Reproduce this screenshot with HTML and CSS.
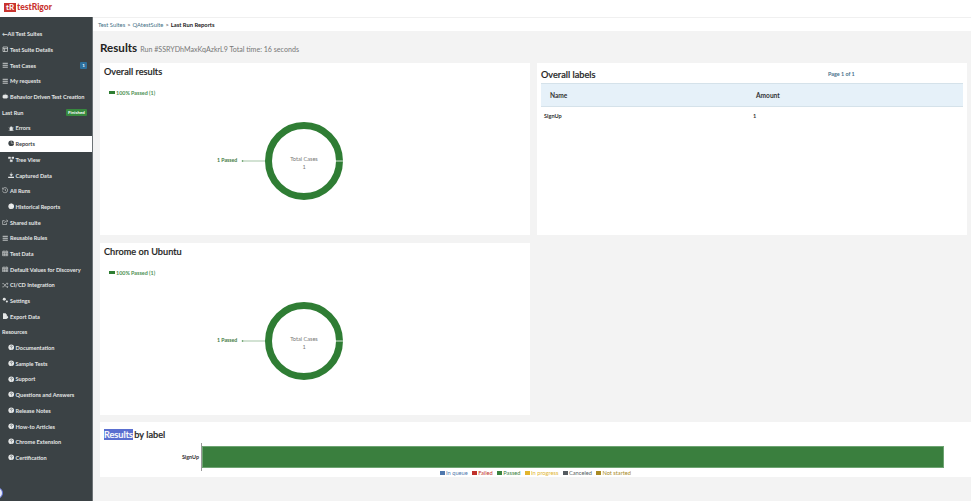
FILE: index.html
```html
<!DOCTYPE html>
<html lang="en">
<head>
    <meta charset="UTF-8">
    <title>testRigor - Last Run Reports</title>
    <link rel="stylesheet" href="styles.css">
</head>
<body>

    <svg class="iconDefs" width="0" height="0">
        <symbol id="list" viewBox="0 0 10 10"><path d="M1 2h8M1 5h8M1 8h8" stroke="currentColor" stroke-width="1.3" fill="none"/></symbol>
        <symbol id="box" viewBox="0 0 10 10"><path d="M1.5 1.5h7v7h-7zM1.5 4h7M4 4v4.5" stroke="currentColor" stroke-width="1" fill="none"/></symbol>
        <symbol id="help" viewBox="0 0 10 10"><circle cx="5" cy="5" r="4.4" fill="currentColor"/><path d="M3.7 4a1.3 1.3 0 1 1 1.9 1.2c-.5.3-.6.5-.6 1" stroke="#3b4245" stroke-width=".9" fill="none"/><circle cx="5" cy="7.6" r=".6" fill="#3b4245"/></symbol>
        <symbol id="pie" viewBox="0 0 10 10"><circle cx="5" cy="5" r="4.4" fill="currentColor"/><path d="M5 5V.6M5 5h4.4" stroke="#fff" stroke-width=".7"/></symbol>
        <symbol id="robot" viewBox="0 0 10 10"><path d="M2.5 3h5a1 1 0 0 1 1 1v3a1 1 0 0 1-1 1h-5a1 1 0 0 1-1-1V4a1 1 0 0 1 1-1zM5 1v2M0 5v2M10 5v2" stroke="currentColor" fill="currentColor" stroke-width=".7"/></symbol>
        <symbol id="bug" viewBox="0 0 10 10"><path d="M3 9V4.5a2 2 0 0 1 4 0V9zM1 4l2 1.5M9 4L7 5.500M1 8.500l2-1M9 8.500l-2-1" stroke="currentColor" fill="currentColor" stroke-width=".7"/></symbol>
        <symbol id="tree" viewBox="0 0 10 10"><path d="M.5 1.500h3.500v2.500h-3.500zM6 1.500h3.500v2.500h-3.500zM3.300 6h3.400v3h-3.400zM2.500 4l2 2M7.500 4l-2 2" stroke="currentColor" fill="currentColor" stroke-width=".6"/></symbol>
        <symbol id="download" viewBox="0 0 10 10"><path d="M5 .5v5M3 3.500h4L5 6.500zM.5 7.500h9v2h-9z" stroke="currentColor" fill="currentColor" stroke-width=".7"/></symbol>
        <symbol id="history" viewBox="0 0 10 10"><path d="M1.500 2.500a4 4 0 1 1-.8 3M5 3v2.300l1.500 1M.5 1v2.300h2.300" stroke="currentColor" fill="none" stroke-width=".9"/></symbol>
        <symbol id="share" viewBox="0 0 10 10"><path d="M7 6v2.500H1v-6h3M4 6c0-2 1.500-3 4-3M7 1l2 2-2 2" stroke="currentColor" fill="none" stroke-width=".9"/></symbol>
        <symbol id="calendar" viewBox="0 0 10 10"><path d="M1 2h8v7H1zM1 4h8M3.500 4v5M6.500 4v5M1 6.500h8M3 1v1M7 1v1" stroke="currentColor" fill="none" stroke-width=".9"/></symbol>
        <symbol id="shuffle" viewBox="0 0 10 10"><path d="M.5 2.500h2l4 5h2.500M.5 7.500h2l4-5h2.500M8 1l1.500 1.500L8 4M8 6l1.500 1.500L8 9" stroke="currentColor" fill="none" stroke-width=".9"/></symbol>
        <symbol id="cogs" viewBox="0 0 10 10"><circle cx="3.500" cy="3.500" r="2.300" fill="currentColor"/><circle cx="7.500" cy="7" r="1.600" fill="currentColor"/></symbol>
        <symbol id="file" viewBox="0 0 10 10"><path d="M1.500 .5h4l2 2v7h-6zM5 5.500h3V4l2 2.500L8 9V7.500H5z" fill="currentColor"/></symbol>
    </svg>

    <header class="topBar">
        <div class="logo"><span class="logoMark">tR</span><span class="logoText">testRigor</span></div>
    </header>

    <div class="appBody">
        <nav class="sideNav">
            <a class="navItem"><span class="backArrow">&#8592;</span>All Test Suites</a>
            <a class="navItem"><svg class="navIcon"><use href="#box"/></svg>Test Suite Details</a>
            <a class="navItem"><svg class="navIcon"><use href="#list"/></svg>Test Cases<span class="countBadge">1</span></a>
            <a class="navItem"><svg class="navIcon"><use href="#list"/></svg>My requests</a>
            <a class="navItem"><svg class="navIcon"><use href="#robot"/></svg>Behavior Driven Test Creation</a>
            <a class="navItem">Last Run<span class="statusBadge">Finished</span></a>
            <a class="navItem subItem"><svg class="navIcon"><use href="#bug"/></svg>Errors</a>
            <a class="navItem subItem active"><svg class="navIcon"><use href="#pie"/></svg>Reports</a>
            <a class="navItem subItem"><svg class="navIcon"><use href="#tree"/></svg>Tree View</a>
            <a class="navItem subItem"><svg class="navIcon"><use href="#download"/></svg>Captured Data</a>
            <a class="navItem"><svg class="navIcon"><use href="#history"/></svg>All Runs</a>
            <a class="navItem subItem"><svg class="navIcon"><use href="#pie"/></svg>Historical Reports</a>
            <a class="navItem"><svg class="navIcon"><use href="#share"/></svg>Shared suite</a>
            <a class="navItem"><svg class="navIcon"><use href="#list"/></svg>Reusable Rules</a>
            <a class="navItem"><svg class="navIcon"><use href="#calendar"/></svg>Test Data</a>
            <a class="navItem"><svg class="navIcon"><use href="#calendar"/></svg>Default Values for Discovery</a>
            <a class="navItem"><svg class="navIcon"><use href="#shuffle"/></svg>CI/CD Integration</a>
            <a class="navItem"><svg class="navIcon"><use href="#cogs"/></svg>Settings</a>
            <a class="navItem"><svg class="navIcon"><use href="#file"/></svg>Export Data</a>
            <a class="navItem">Resources</a>
            <a class="navItem subItem"><svg class="navIcon"><use href="#help"/></svg>Documentation</a>
            <a class="navItem subItem"><svg class="navIcon"><use href="#help"/></svg>Sample Tests</a>
            <a class="navItem subItem"><svg class="navIcon"><use href="#help"/></svg>Support</a>
            <a class="navItem subItem"><svg class="navIcon"><use href="#help"/></svg>Questions and Answers</a>
            <a class="navItem subItem"><svg class="navIcon"><use href="#help"/></svg>Release Notes</a>
            <a class="navItem subItem"><svg class="navIcon"><use href="#help"/></svg>How-to Articles</a>
            <a class="navItem subItem"><svg class="navIcon"><use href="#help"/></svg>Chrome Extension</a>
            <a class="navItem subItem"><svg class="navIcon"><use href="#help"/></svg>Certification</a>
            <span class="helpBubble"></span>
        </nav>

        <div class="mainColumn">
            <div class="breadcrumb">
                <a>Test Suites</a><span class="crumbSep">&gt;</span><a>QAtestSuite</a><span class="crumbSep">&gt;</span><span class="crumbCurrent">Last Run Reports</span>
            </div>

            <main class="content">
                <div class="pageTitle">
                    <h1>Results</h1>
                    <span class="runInfo">Run #SSRYDhMaxKqAzkrL9 Total time: 16 seconds</span>
                </div>

                <div class="cardGrid">
                    <section class="card">
                        <h2>Overall results</h2>
                        <div class="chartLegend"><span class="swatch"></span>100% Passed (1)</div>
                        <svg class="donut" viewBox="0 0 430 106" width="430" height="106">
                            <circle cx="204" cy="61" r="35.500" fill="none" stroke="#2f7d34" stroke-width="7"/>
                            <path d="M235 61h8" stroke="#fff" stroke-width=".8"/>
                            <path d="M143 61h22" stroke="#7fae82" stroke-width=".7"/>
                            <circle cx="142.500" cy="61" r=".8" fill="#36803a"/>
                            <text class="donutLabel" x="117" y="62">1 Passed</text>
                            <text class="donutCenter" x="204" y="61">Total Cases</text>
                            <text class="donutCenter" x="204" y="69">1</text>
                        </svg>
                    </section>

                    <section class="card labelsCard">
                        <div class="labelsHead">
                            <h2>Overall labels</h2>
                            <span class="pageCount">Page 1 of 1</span>
                        </div>
                        <table class="labelsTable">
                            <thead>
                                <tr><th>Name</th><th>Amount</th></tr>
                            </thead>
                            <tbody>
                                <tr><td>SignUp</td><td class="amount">1</td></tr>
                            </tbody>
                        </table>
                    </section>

                    <section class="card">
                        <h2>Chrome on Ubuntu</h2>
                        <div class="chartLegend"><span class="swatch"></span>100% Passed (1)</div>
                        <svg class="donut" viewBox="0 0 430 106" width="430" height="106">
                            <circle cx="204" cy="61" r="35.500" fill="none" stroke="#2f7d34" stroke-width="7"/>
                            <path d="M235 61h8" stroke="#fff" stroke-width=".8"/>
                            <path d="M143 61h22" stroke="#7fae82" stroke-width=".7"/>
                            <circle cx="142.500" cy="61" r=".8" fill="#36803a"/>
                            <text class="donutLabel" x="117" y="62">1 Passed</text>
                            <text class="donutCenter" x="204" y="61">Total Cases</text>
                            <text class="donutCenter" x="204" y="69">1</text>
                        </svg>
                    </section>
                </div>

                <section class="card byLabel">
                    <h2><span class="selected">Results</span> by label</h2>
                    <div class="barRow">
                        <span class="barName">SignUp</span>
                        <div class="barTrack"><div class="barFill"></div></div>
                    </div>
                    <div class="barLegend">
                        <span class="legendItem queue"><i></i>In queue</span>
                        <span class="legendItem failed"><i></i>Failed</span>
                        <span class="legendItem passed"><i></i>Passed</span>
                        <span class="legendItem progress"><i></i>In progress</span>
                        <span class="legendItem canceled"><i></i>Canceled</span>
                        <span class="legendItem notStarted"><i></i>Not started</span>
                    </div>
                </section>
            </main>
        </div>
    </div>

</body>
</html>
```

FILE: styles.css
```css
* {
    box-sizing: border-box;
}

html, body {
    height: 100%;
}

body {
    margin: 0;
    font-family: Lato, 'Open Sans', sans-serif;
    background-color: #fff;
    color: #333;
    overflow: hidden;
}

.iconDefs {
    display: block;
    height: 0;
}

h1, h2 {
    margin: 0;
}

/* top bar */
.topBar {
    height: 17px;
    padding: 3px 0 0 4px;
    background-color: #fff;
}

.logo {
    display: flex;
    align-items: center;
    height: 9px;
}

.logoMark {
    width: 12px;
    height: 9px;
    margin-right: 1px;
    background-color: #c9342f;
    color: #fff;
    font-size: 8px;
    font-weight: 700;
    line-height: 9px;
    text-align: center;
}

.logoText {
    color: #c9342f;
    font-size: 8.500px;
    font-weight: 900;
    line-height: 9px;
}

.appBody {
    display: flex;
    height: 484px;
}

/* sidebar */
.sideNav {
    position: relative;
    flex: 0 0 93px;
    padding-top: 9px;
    background-color: #3b4245;
    border-right: 1px solid #6d7376;
    color: #e4e6e6;
    font-size: 5.600px;
    font-weight: 700;
    overflow: hidden;
}

.navItem {
    display: flex;
    align-items: center;
    height: 15.700px;
    padding: 0 5px 0 2px;
    white-space: nowrap;
}

.subItem {
    padding-left: 7.500px;
}

.navItem.active {
    background-color: #fff;
    color: #3b4245;
}

.navIcon {
    flex: none;
    width: 6.500px;
    height: 6.500px;
    margin-right: 1.500px;
}

.backArrow {
    margin-right: 0;
}

.countBadge, .statusBadge {
    margin-left: auto;
    color: #fff;
    border-radius: 1px;
    font-size: 4.500px;
    text-align: center;
}

.countBadge {
    width: 7px;
    height: 7px;
    background-color: #2d6f9c;
    line-height: 7px;
}

.statusBadge {
    width: 21px;
    height: 7px;
    background-color: #37893e;
    line-height: 7px;
}

.helpBubble {
    position: absolute;
    left: -9px;
    top: 470px;
    width: 12px;
    height: 12px;
    border: 1px solid #5d6fd6;
    border-radius: 50%;
    background-color: #e9ebfa;
}

/* main */
.mainColumn {
    flex: 0 0 878px;
    display: flex;
    flex-direction: column;
}

.breadcrumb {
    height: 14px;
    padding-left: 5px;
    background-color: #fff;
    border-top: 1px solid #f0f0f0;
    color: #3f6f84;
    font-size: 5.800px;
    line-height: 13px;
}

.crumbSep {
    margin: 0 2px;
    color: #444;
}

.crumbCurrent {
    color: #222;
    font-weight: 700;
}

.content {
    flex: 1;
    padding: 0 4px 0 7px;
    background-color: #f3f3f3;
}

.pageTitle {
    display: flex;
    align-items: baseline;
    height: 32px;
    padding-top: 10px;
}

.pageTitle h1 {
    margin-right: 3px;
    color: #222;
    font-size: 11.600px;
    font-weight: 700;
}

.runInfo {
    color: #777;
    font-size: 7.100px;
}

.cardGrid {
    display: grid;
    grid-template-columns: 430px 430px;
    grid-template-rows: 172px 172px;
    gap: 8px 7px;
}

.card {
    background-color: #fff;
}

.card h2 {
    color: #222;
    font-size: 9.200px;
    font-weight: 500;
    -webkit-text-stroke: .2px #222;
}

.cardGrid > .card {
    padding-top: 3px;
}

.cardGrid > .card h2 {
    padding-left: 4px;
    line-height: 11px;
}

.chartLegend {
    display: flex;
    align-items: center;
    height: 8px;
    margin-top: 11.500px;
    padding-left: 9px;
    color: #4c8f50;
    font-size: 5.400px;
    font-weight: 700;
}

.swatch {
    width: 6px;
    height: 3.500px;
    margin-right: 1px;
    background-color: #2e7d32;
}

.donut {
    display: block;
    margin-top: 3.500px;
}

.donutLabel {
    fill: #3e7a42;
    font-size: 5.200px;
    font-weight: 700;
}

.donutCenter {
    fill: #777;
    font-size: 5.600px;
    text-anchor: middle;
}

/* labels table */
.labelsCard {
    padding: 3px 4px 0;
}

.labelsHead {
    display: flex;
    height: 17px;
}

.cardGrid > .card .labelsHead h2 {
    width: 287px;
    padding: 3px 0 0;
    line-height: 12px;
}

.pageCount {
    padding-top: 3px;
    color: #47708a;
    font-size: 5.400px;
    font-weight: 700;
    line-height: 10px;
}

.labelsTable {
    width: 422px;
    border-collapse: collapse;
    font-size: 5.600px;
}

.labelsTable th {
    height: 23px;
    padding: 0 0 0 9px;
    background-color: #e6f1f9;
    border: 1px solid #d5e2ea;
    border-width: 1px 0;
    color: #333;
    font-size: 6.600px;
    font-weight: 700;
    text-align: left;
}

.labelsTable th:first-child {
    width: 206px;
}

.labelsTable td {
    height: 17px;
    padding: 0 0 0 3px;
    color: #333;
    font-weight: 700;
}

.labelsTable td.amount {
    padding-left: 6px;
}

/* results by label */
.byLabel {
    height: 55px;
    margin: 7px -4px 0 0;
    padding: 6px 0 0 4px;
}

.byLabel h2 {
    line-height: 13px;
}

.selected {
    margin-right: -1px;
    background-color: #5a6fd0;
    color: #fff;
    -webkit-text-stroke: .2px #fff;
}

.barRow {
    display: flex;
    align-items: center;
    height: 28px;
    margin-top: 2px;
}

.barName {
    width: 97px;
    padding-right: 2px;
    color: #333;
    font-size: 5.400px;
    font-weight: 700;
    text-align: right;
}

.barTrack {
    display: flex;
    align-items: center;
    height: 28px;
    border-left: 1px solid #999;
}

.barFill {
    width: 742px;
    height: 22px;
    background-color: #3a7f3e;
    border: 1px solid #6ea472;
}

.barLegend {
    display: flex;
    justify-content: center;
    gap: 4.500px;
    height: 6px;
    margin-left: -4px;
    margin-top: -1px;
    font-size: 5.700px;
    line-height: 6px;
}

.legendItem {
    display: flex;
    align-items: center;
}

.legendItem i {
    width: 5px;
    height: 3.500px;
    margin-right: 1px;
    background-color: currentColor;
}

.queue { color: #4f77ad; }
.failed { color: #c0312b; }
.passed { color: #3a8240; }
.progress { color: #e2b52e; }
.canceled { color: #555b60; }
.notStarted { color: #a88a24; }
```
